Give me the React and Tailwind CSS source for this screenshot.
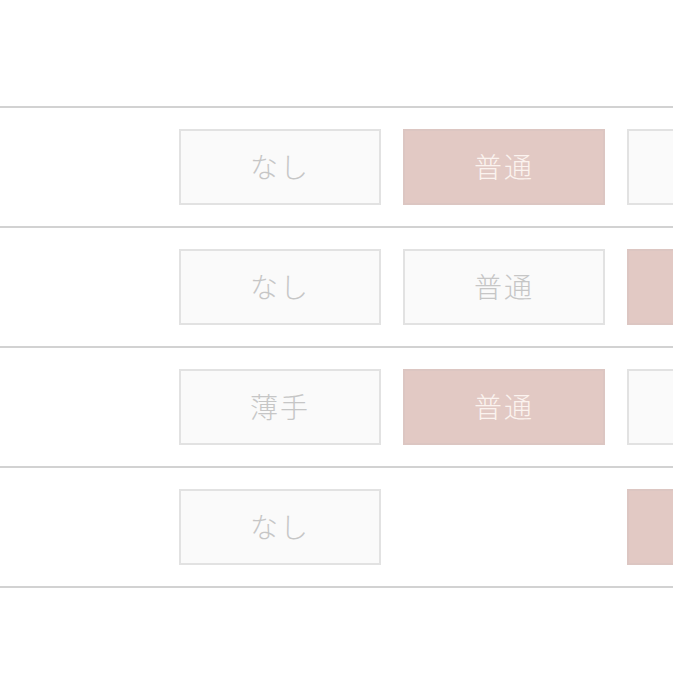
import React from "react";

const rows = [
  ["なし", "普通", ""],
  ["なし", "普通", ""],
  ["薄手", "普通", ""],
  ["なし", null, ""],
];
const active = [
  [false, true, false],
  [false, false, true],
  [false, true, false],
  [false, null, true],
];

function Btn({ label, on }) {
  if (label === null) return <div className="w-[202px] h-[76px] shrink-0" />;
  return (
    <div
      className={
        "w-[202px] h-[76px] shrink-0 flex items-center justify-center border-2 text-[28px] leading-none pb-[2px] font-light tracking-[2px] " +
        (on
          ? "bg-[#e2c9c4] border-[#dcc6c2] text-[#fbf3ef]"
          : "bg-[#fafafa] border-[#e2e2e2] text-[#c6c6c6]")
      }
    >
      {label}
    </div>
  );
}

export default function App() {
  return (
    <div
      className="w-[673px] h-[673px] bg-white overflow-hidden pt-[106px]"
      style={{ fontFamily: '"Noto Sans CJK JP", "Noto Sans", sans-serif' }}
    >
      {rows.map((r, i) => (
        <div
          key={i}
          className={
            "border-t-2 border-[#d2d2d2] h-[120px] flex items-center gap-[22px] pl-[179px] overflow-hidden " +
            (i === rows.length - 1 ? "border-b-2 h-[122px]" : "")
          }
        >
          {r.map((l, j) => (
            <Btn key={j} label={l} on={active[i][j]} />
          ))}
        </div>
      ))}
    </div>
  );
}
